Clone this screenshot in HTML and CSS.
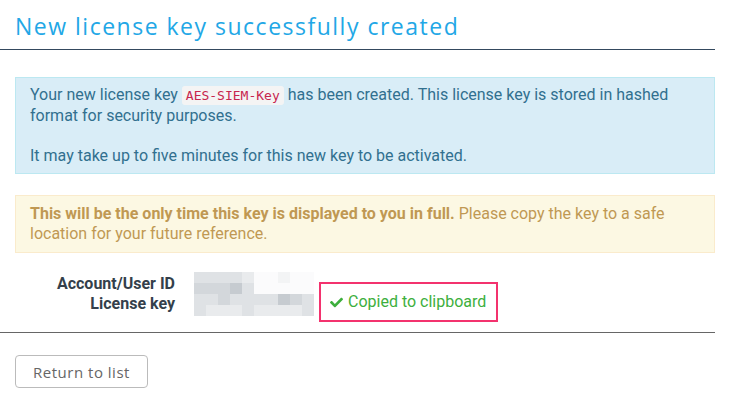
FILE: index.html
```html
<!DOCTYPE html>
<html>
<head>
<meta charset="utf-8">
<link rel="stylesheet" href="styles.css">
</head>
<body>
<div class="page">
  <header class="page-header">
    <h1 class="title">New license key successfully created</h1>
  </header>
  <div class="content">
    <div class="alert alert-info">
      <p>Your new license key <code class="code">AES-SIEM-Key</code> has been created. This license key is stored in hashed format for security purposes.</p>
      <p>It may take up to five minutes for this new key to be activated.</p>
    </div>
    <div class="alert alert-warning">
      <p><strong>This will be the only time this key is displayed to you in full.</strong> Please copy the key to a safe location for your future reference.</p>
    </div>
    <div class="details">
      <div class="labels">
        <div class="label">Account/User ID</div>
        <div class="label">License key</div>
      </div>
      <div class="mosaic">
        <span class="c1"></span><span class="c1"></span><span class="c1"></span><span class="c1"></span><span class="c0"></span><span class="cx"></span><span class="cx"></span><span class="cz"></span><span class="cx"></span><span class="cx"></span>
        <span class="c2"></span><span class="c2"></span><span class="c2"></span><span class="c3"></span><span class="c1"></span><span class="cx"></span><span class="cx"></span><span class="cx"></span><span class="cx"></span><span class="cx"></span>
        <span class="c1"></span><span class="c1"></span><span class="c2"></span><span class="c1"></span><span class="c1"></span><span class="c1"></span><span class="c1"></span><span class="c3"></span><span class="c2"></span><span class="c1"></span>
        <span class="c1"></span><span class="c0"></span><span class="c0"></span><span class="c0"></span><span class="c1"></span><span class="c0"></span><span class="c0"></span><span class="c0"></span><span class="c0"></span><span class="c1"></span>
      </div>
      <div class="copied">
        <svg class="check" viewBox="0 0 512 512" width="13" height="13"><path fill="currentColor" d="M173.9 439.4L7.5 273c-10-10-10-26.2 0-36.2l36.2-36.2c10-10 26.2-10 36.2 0L192 312.7 432.1 72.6c10-10 26.2-10 36.2 0l36.2 36.2c10 10 10 26.2 0 36.2L210.1 439.4c-10 10-26.2 10-36.2 0z"/></svg>
        <span>Copied to clipboard</span>
      </div>
    </div>
  </div>
  <div class="footer">
    <button class="btn">Return to list</button>
  </div>
</div>
</body>
</html>
```
FILE: styles.css
```css
* { box-sizing: border-box; }
body {
  margin: 0;
  background: #fff;
  font-family: Roboto, "Liberation Sans", sans-serif;
  font-size: 16px;
  line-height: 20px;
}
.page { width: 715px; }
.page-header {
  border-bottom: 1px solid #34495e;
  padding: 13px 0 9px 15px;
}
.title {
  margin: 0;
  font-family: "Open Sans", sans-serif;
  font-weight: 400;
  font-size: 23px;
  line-height: 27px;
  letter-spacing: 1.5px;
  color: #22a7e6;
}
.content { padding: 27px 0 10px 15px; border-bottom: 1px solid #666; }
.alert { border: 1px solid; padding: 7px 14px; }
.alert p { margin: 0; }
.alert p + p { margin-top: 20px; }
.alert-info {
  background: #d9edf7;
  border-color: #bce8f1;
  color: #31708f;
}
.alert-warning {
  margin-top: 21px;
  background: #fcf8e3;
  border-color: #faebcc;
  color: #c09853;
  padding: 8px 14px;
}
.code {
  font-family: "DejaVu Sans Mono", monospace;
  font-size: 13px;
  color: #c7254e;
  background: #f4f4f4;
  padding: 2px 4px;
  border-radius: 3px;
}
.details { display: flex; align-items: flex-start; margin-top: 19px; }
.labels { width: 160px; text-align: right; padding-top: 2px; }
.label { font-weight: 700; color: #343f4b; }
.mosaic {
  margin-left: 19px;
  display: grid;
  grid-template-columns: repeat(10, 12px);
  grid-auto-rows: 11px;
}
.mosaic span { display: block; }
.c0 { background: #e9ebed; }
.c1 { background: #dfe2e5; }
.c2 { background: #d3d7db; }
.c3 { background: #c6cbd0; }
.cx { background: #fbfbfc; }
.cz { background: #f3f4f5; }
.copied {
  margin-top: 10px;
  margin-left: 5px;
  border: 2px solid #f3326e;
  display: flex;
  align-items: center;
  gap: 5px;
  padding: 8px 10px 8px 9px;
  color: #3daf3d;
  font-size: 16px;
  line-height: 20px;
}
.check { flex: none; }
.footer { padding: 22px 0 0 15px; }
.btn {
  font-family: "Open Sans", sans-serif;
  font-size: 15px;
  letter-spacing: 0.5px;
  color: #666;
  background: #fff;
  border: 1px solid #bbb;
  border-radius: 4px;
  width: 133px;
  height: 33px;
  padding: 0;
}
```
